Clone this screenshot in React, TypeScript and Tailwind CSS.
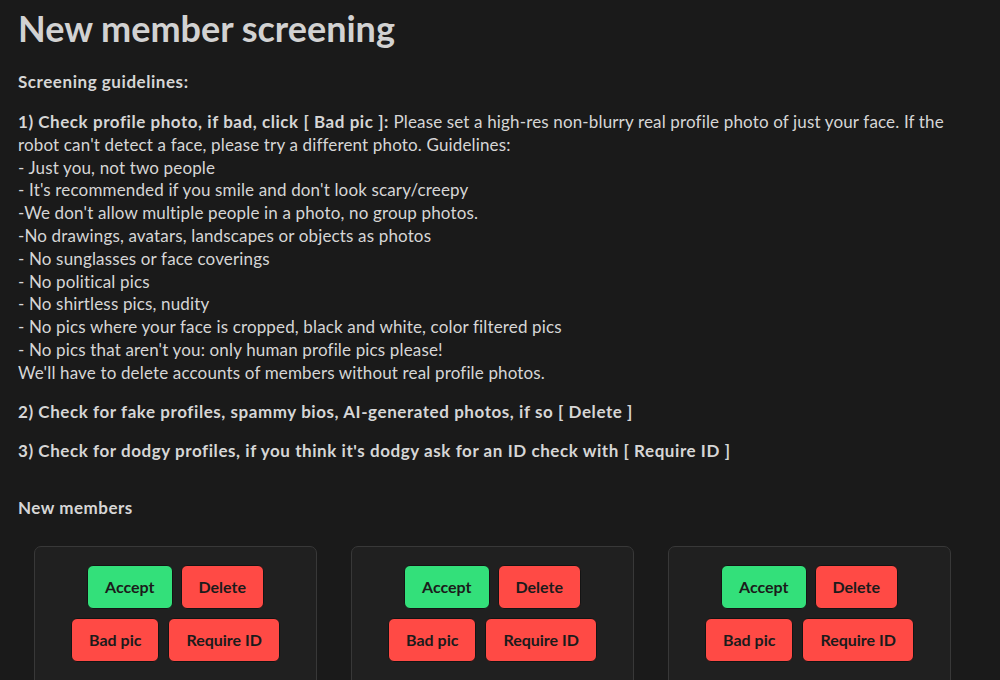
import React from "react";

const rules = [
  "- Just you, not two people",
  "- It's recommended if you smile and don't look scary/creepy",
  "-We don't allow multiple people in a photo, no group photos.",
  "-No drawings, avatars, landscapes or objects as photos",
  "- No sunglasses or face coverings",
  "- No political pics",
  "- No shirtless pics, nudity",
  "- No pics where your face is cropped, black and white, color filtered pics",
  "- No pics that aren't you: only human profile pics please!",
  "We'll have to delete accounts of members without real profile photos.",
];

function Btn({ children, green }: { children: React.ReactNode; green?: boolean }) {
  return (
    <button
      className={
        "h-[44px] px-[17px] rounded-[6px] border border-[#141414] font-bold text-[16px] text-[#1b1b1b] " +
        (green ? "bg-[#33e07a]" : "bg-[#ff4a45]")
      }
    >
      {children}
    </button>
  );
}

function Card() {
  return (
    <div className="w-[283px] h-[180px] rounded-[7px] border border-[#383838] bg-[#202020] pt-[18px] flex flex-col items-center gap-[9px]">
      <div className="flex justify-center gap-[8px]">
        <Btn green>Accept</Btn>
        <Btn>Delete</Btn>
      </div>
      <div className="flex justify-center gap-[9px]">
        <Btn>Bad pic</Btn>
        <Btn>Require ID</Btn>
      </div>
    </div>
  );
}

export default function App() {
  return (
    <div
      className="w-[1000px] h-[680px] overflow-hidden bg-[#1a1a1a] text-[#d6d6d6] px-[18px] pt-[7px]"
      style={{ fontFamily: "Lato, 'Open Sans', sans-serif" }}
    >
      <h1 className="text-[36px] font-bold leading-[42px] text-[#d2d2d2]">New member screening</h1>
      <h2 className="mt-[22px] text-[17px] font-bold leading-[22px] tracking-[0.55px]">Screening guidelines:</h2>
      <div className="mt-[18px] text-[17px] leading-[22.8px] tracking-[0.15px]">
        <p>
          <span className="font-bold tracking-[0.55px]">1) Check profile photo, if bad, click [ Bad pic ]:</span> Please
          set a high-res non-blurry real profile photo of just your face. If the robot can't detect a face, please try a
          different photo. Guidelines:
        </p>
        {rules.map((r) => (
          <p key={r}>{r}</p>
        ))}
      </div>
      <p className="mt-[16px] text-[17px] leading-[22.8px] font-bold tracking-[0.56px]">
        2) Check for fake profiles, spammy bios, AI-generated photos, if so [ Delete ]
      </p>
      <p className="mt-[17px] text-[17px] leading-[22.8px] font-bold tracking-[0.56px]">
        3) Check for dodgy profiles, if you think it's dodgy ask for an ID check with [ Require ID ]
      </p>
      <h3 className="mt-[34px] text-[17px] leading-[22.8px] font-bold tracking-[0.5px]">New members</h3>
      <div className="mt-[26px] pl-[16px] flex gap-[34px]">
        <Card />
        <Card />
        <Card />
      </div>
    </div>
  );
}
